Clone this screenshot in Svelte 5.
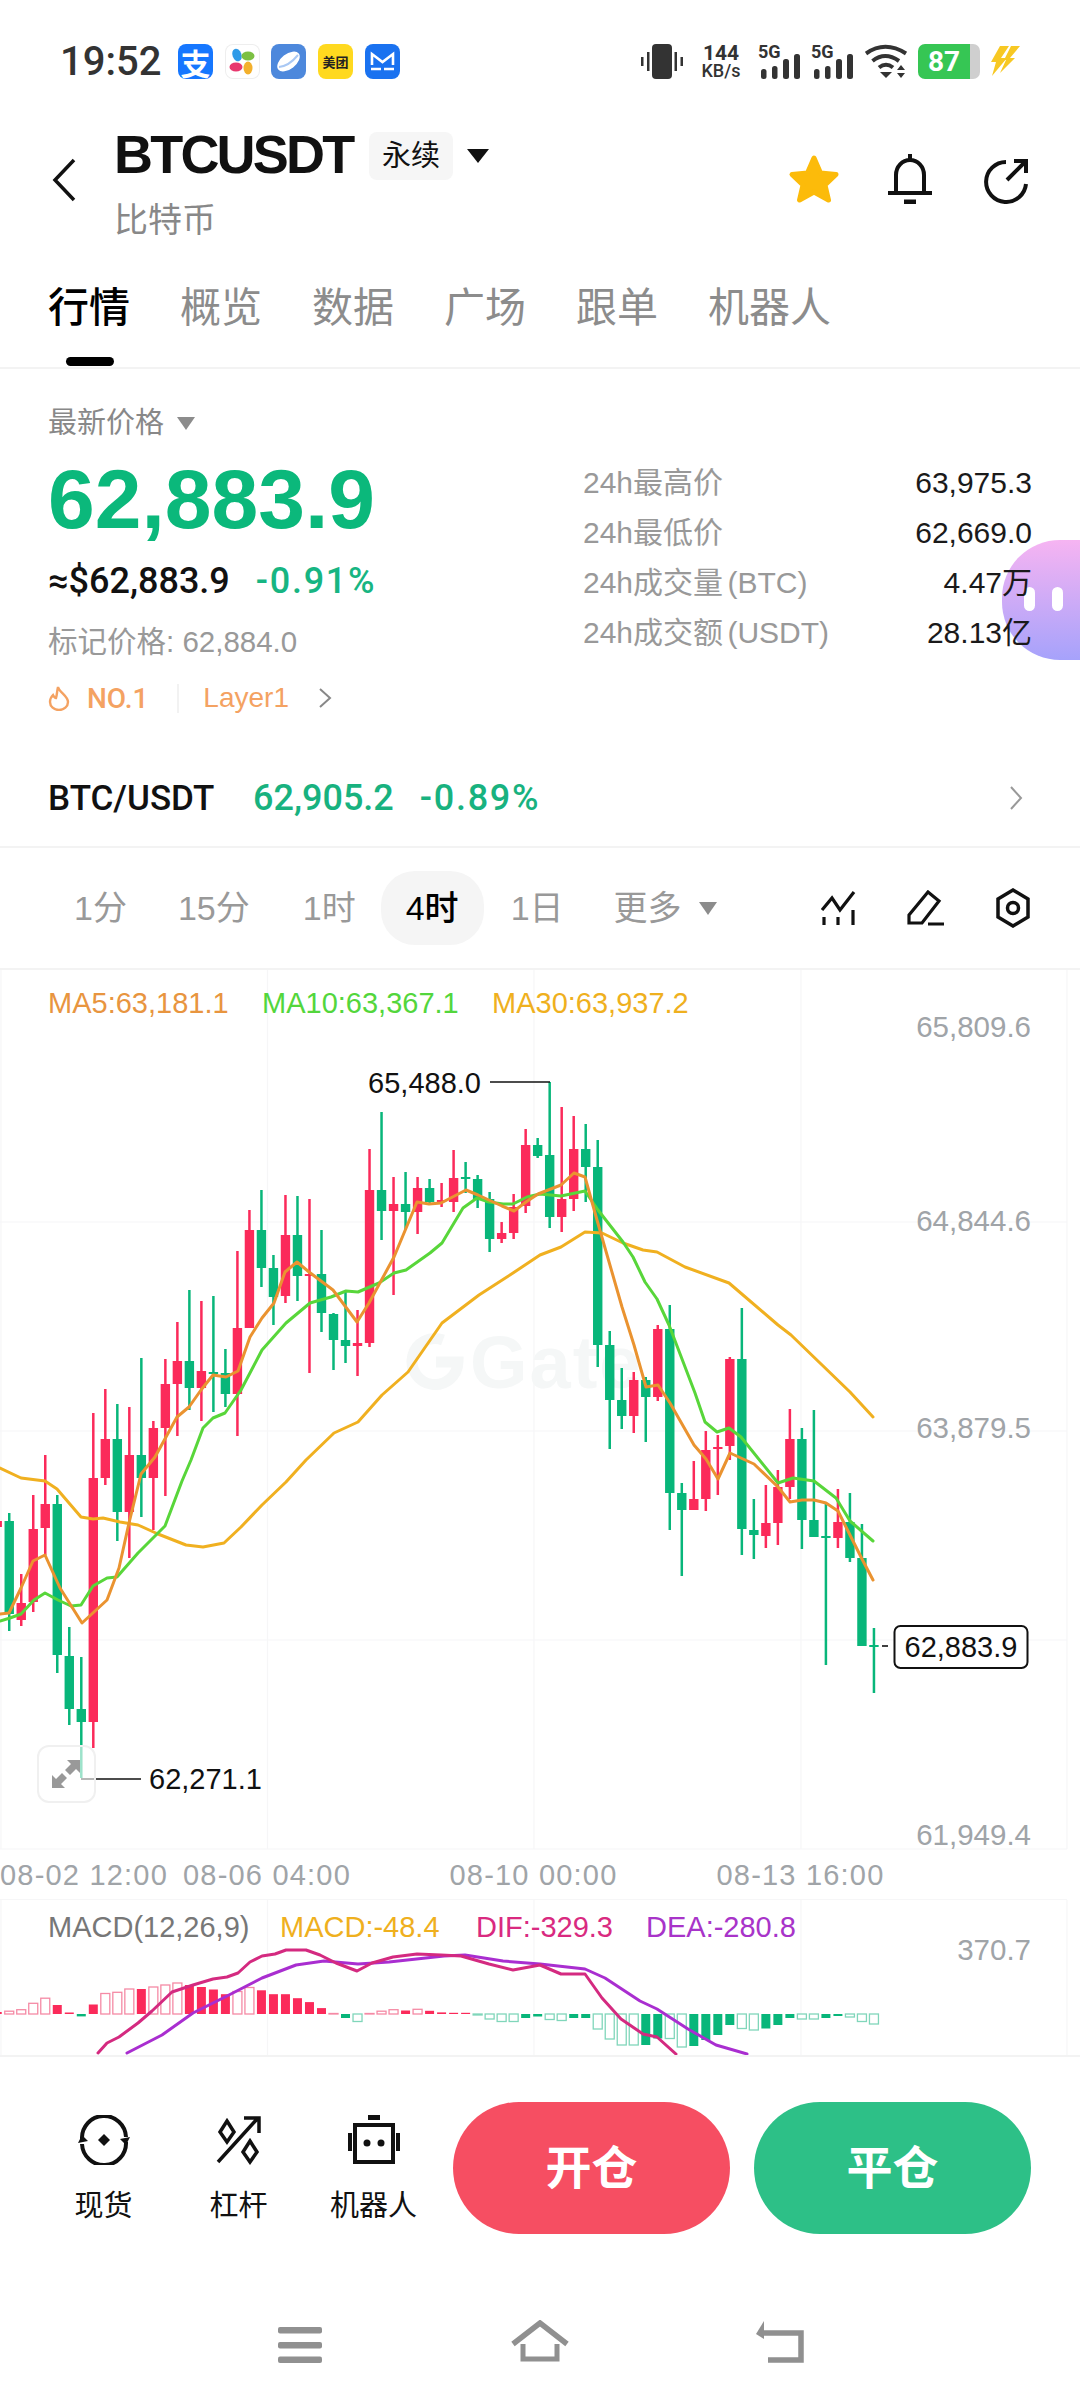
<script>
  // [wickTop, bodyTop, bodyBottom, wickBottom, isRed], first candle sits at i = -8
  const CANDLES = [
    [1521,1521,1527,1527,1],[1513,1521,1614,1631,0],[1574,1603,1620,1626,1],[1495,1529,1602,1612,1],
    [1455,1504,1528,1555,1],[1495,1504,1655,1673,0],[1627,1656,1709,1725,0],[1657,1709,1722,1778,0],
    [1413,1478,1722,1748,1],[1389,1439,1478,1485,1],[1404,1439,1512,1541,0],[1407,1455,1512,1558,1],
    [1358,1455,1478,1517,0],[1421,1428,1478,1530,1],[1359,1384,1428,1496,1],[1322,1361,1384,1436,1],
    [1290,1361,1388,1410,0],[1301,1371,1388,1421,1],[1296,1372,1374,1412,0],[1349,1373,1394,1407,0],
    [1251,1328,1394,1436,1],[1210,1230,1328,1328,1],[1190,1230,1268,1287,0],[1255,1268,1297,1325,0],
    [1195,1235,1296,1303,1],[1196,1235,1276,1301,0],[1199,1274,1276,1373,1],[1230,1274,1313,1332,0],
    [1313,1314,1340,1370,0],[1290,1340,1346,1363,0],[1310,1343,1346,1376,1],[1149,1190,1343,1347,1],
    [1112,1190,1211,1240,0],[1177,1204,1211,1295,1],[1172,1204,1212,1229,0],[1177,1188,1212,1234,1],
    [1179,1188,1202,1205,0],[1183,1200,1202,1207,1],[1150,1178,1202,1212,1],[1162,1177,1179,1193,0],
    [1175,1179,1199,1208,0],[1192,1199,1239,1252,0],[1222,1233,1239,1243,1],[1194,1207,1233,1239,1],
    [1129,1145,1206,1213,1],[1138,1145,1156,1158,0],[1082,1155,1217,1228,0],[1107,1199,1217,1232,1],
    [1116,1149,1199,1211,1],[1124,1149,1167,1202,0],[1140,1167,1345,1367,0],[1331,1345,1400,1449,0],
    [1368,1400,1416,1429,0],[1372,1380,1416,1433,1],[1377,1380,1397,1442,0],[1325,1329,1397,1401,1],
    [1305,1329,1493,1530,0],[1483,1493,1510,1576,0],[1461,1499,1510,1510,1],[1431,1450,1499,1511,1],
    [1435,1447,1449,1495,1],[1357,1359,1446,1460,1],[1308,1359,1529,1555,0],[1499,1530,1535,1559,0],
    [1485,1523,1536,1548,1],[1470,1487,1523,1545,1],[1409,1439,1487,1499,1],[1428,1439,1520,1549,0],
    [1410,1520,1537,1537,0],[1503,1536,1538,1665,0],[1489,1522,1538,1548,1],[1493,1522,1558,1562,0],
    [1524,1558,1646,1646,0],[1628,1645,1647,1693,0]
  ]

  const MA30 = '0,1468 21,1478 45,1481 57,1489 81,1517 93,1519 103,1518 120,1522 138,1525 158,1534 186,1545 203,1547 224,1543 241,1527 262,1505 286,1482 306,1460 334,1433 358,1422 382,1395 408,1372 442,1323 479,1295 513,1273 540,1255 561,1247 585,1232 602,1233 623,1243 643,1250 657,1252 685,1267 729,1283 778,1325 791,1335 850,1392 873,1417'
  const MA10 = '0,1621 10,1618 21,1614 34,1600 45,1593 58,1600 71,1606 81,1605 93,1586 107,1578 117,1577 138,1553 165,1526 182,1481 191,1460 203,1428 213,1418 225,1413 241,1390 262,1350 286,1323 310,1303 331,1297 346,1291 358,1292 379,1283 394,1273 406,1270 430,1253 442,1243 463,1208 477,1198 489,1202 503,1204 513,1204 527,1197 540,1194 561,1196 585,1191 598,1210 623,1242 633,1257 645,1282 657,1299 669,1325 695,1393 705,1422 717,1432 729,1428 741,1437 778,1483 793,1478 814,1481 836,1498 850,1521 873,1541'
  const MA5 = '0,1614 9,1613 21,1588 33,1561 45,1555 60,1588 82,1623 107,1600 119,1568 129,1523 141,1474 155,1457 177,1417 189,1407 201,1390 213,1375 226,1377 238,1371 250,1337 262,1318 274,1303 285,1272 297,1262 309,1272 333,1290 357,1322 369,1303 394,1257 417,1202 429,1204 441,1203 466,1190 478,1195 502,1206 514,1211 526,1202 538,1194 561,1185 574,1173 585,1177 597,1220 622,1307 634,1345 646,1387 658,1385 670,1403 694,1445 706,1459 718,1479 730,1453 754,1464 778,1487 790,1502 802,1500 814,1500 826,1503 838,1511 850,1535 862,1559 873,1580'
  const DIF = '98,2053 107,2043 119,2037 138,2023 152,2011 172,1992 193,1985 213,1979 227,1977 238,1973 250,1962 262,1956 275,1954 286,1950 306,1950 320,1955 336,1963 357,1971 372,1963 393,1957 417,1954 441,1955 461,1956 489,1964 513,1970 540,1965 561,1974 585,1974 602,1998 621,2019 643,2034 657,2037 676,2054'
  const DEA = '127,2053 162,2035 193,2013 227,1996 262,1978 296,1965 324,1961 358,1964 389,1962 444,1956 465,1955 503,1961 540,1964 585,1969 605,1978 640,2001 657,2009 688,2029 716,2045 747,2054'

  // histogram: [height above baseline, filled?], index matches CANDLES
  const BARS = [
    [2,1],[2.8,0],[4.3,0],[10.7,0],[15.8,0],[9,1],[1.5,1],[-2.4,1],[9.5,1],[20.5,0],[21.7,0],[25,0],[25,1],[27,0],[29,0],[31,0],
    [29,1],[27,1],[24.5,1],[19.8,1],[22.5,0],[26.5,0],[23.7,1],[19.8,1],[19.8,1],[15.8,1],[11.9,1],[5.9,1],[0.5,0],[-4,1],[-7.5,0],[0.5,0],
    [2.8,0],[4.3,0],[3.5,1],[4.7,0],[3.2,1],[1.6,1],[1.2,1],[1.2,1],[-1,0],[-5,0],[-7.5,0],[-7.5,0],[-4,1],[-2.5,1],[-5.5,0],[-6.5,0],
    [-4,1],[-4,1],[-15,0],[-25,0],[-31,0],[-31,0],[-31,1],[-24.5,1],[-24.5,0],[-33,0],[-32,1],[-26,1],[-21,1],[-11,1],[-14.5,0],[-16,0],
    [-14.5,1],[-11,1],[-4,1],[-5,0],[-5,0],[-4,1],[-2,1],[-3,0],[-7.5,0],[-10,0]
  ]

  const BASE = 2014
  const xAt = (n) => 93.3 + 12.01 * (n - 8)

  const TABS = ['行情', '概览', '数据', '广场', '跟单', '机器人']
  const STATS = [
    ['24h最高价', '63,975.3'],
    ['24h最低价', '62,669.0'],
    ['24h成交量 (BTC)', '4.47万'],
    ['24h成交额 (USDT)', '28.13亿']
  ]
  const GRID_X = [1, 267.5, 534, 801, 1067]
  const GRID_Y = [1222, 1431, 1640]
</script>

<div class="page">
  <div class="status">
    <span class="time">19:52</span>
    <div class="apps">
      <span class="app alipay">支</span>
      <span class="app petals">
        <svg viewBox="0 0 35 35" width="35" height="35">
          <ellipse cx="12" cy="11" rx="4.500" ry="6.500" fill="#2f9be8" transform="rotate(-20 12 11)"/>
          <ellipse cx="23" cy="12" rx="6.500" ry="4.500" fill="#7cc043"/>
          <ellipse cx="11" cy="23" rx="6.500" ry="4.500" fill="#e8386e"/>
          <ellipse cx="23" cy="24" rx="4.500" ry="6.500" fill="#f3b02c"/>
        </svg>
      </span>
      <span class="app planet">
        <svg viewBox="0 0 35 35" width="35" height="35">
          <ellipse cx="17.500" cy="17.500" rx="13" ry="7.500" fill="#fff" transform="rotate(-38 17.500 17.500)"/>
          <path d="M8 23 Q18 22 27 11" fill="none" stroke="#a9c8f4" stroke-width="2"/>
        </svg>
      </span>
      <span class="app meituan">美团</span>
      <span class="app mail">
        <svg viewBox="0 0 35 35" width="35" height="35">
          <path d="M7 21V10l10.500 8L28 10v11" fill="none" stroke="#fff" stroke-width="2.600"/>
          <path d="M6 25h10M19 25h10" stroke="#fff" stroke-width="2.600"/>
        </svg>
      </span>
    </div>
    <div class="sys">
      <svg class="vib" viewBox="0 0 42 35" width="42" height="35" fill="#333">
        <rect x="11" width="20" height="35" rx="4"/>
        <rect x="6" y="8" width="2.500" height="19"/>
        <rect x="0" y="13" width="2.500" height="9"/>
        <rect x="33.500" y="8" width="2.500" height="19"/>
        <rect x="39.500" y="13" width="2.500" height="9"/>
      </svg>
      <div class="speed"><b>144</b><span>KB/s</span></div>
      {#each [0, 1] as s}
        <div class="sig">
          <span class="fiveg">5G</span>
          <svg viewBox="0 0 42 35" width="42" height="35" fill="#333">
            <rect x="3" y="25" width="5.500" height="10" rx="2.500"/>
            <rect x="14" y="22" width="5.500" height="13" rx="2.500"/>
            <rect x="25" y="15" width="6" height="20" rx="2.500"/>
            <rect x="36" y="10" width="6" height="25" rx="2.500"/>
          </svg>
        </div>
      {/each}
      <svg class="wifi" viewBox="0 0 43 35" width="43" height="35" fill="none" stroke="#333" stroke-width="4">
        <path d="M1 9.500 Q20 -4 41 9.500"/>
        <path d="M7.500 17 Q20 7 34 17"/>
        <path d="M14 23.500 Q21 18 28 23.500"/>
        <path d="M15 28h12l-6 6z" fill="#333" stroke="none"/>
        <path d="M32 26l4-5 4 5zM32 29h8l-4 5z" fill="#333" stroke="none"/>
      </svg>
      <div class="batt"><span class="lvl">87</span><span class="cap"></span></div>
      <svg class="bolt" viewBox="0 0 30 35" width="30" height="35" fill="#f7c823">
        <path d="M10 2h9l-8 12h6L2 32l4-14H1z"/>
        <path d="M21 2h9L20 14h5L10 29l6-13h-2z"/>
      </svg>
    </div>
  </div>

  <div class="head">
    <svg class="back" viewBox="0 0 24 44" width="24" height="44" fill="none" stroke="#111" stroke-width="3.500">
      <path d="M22 2 3 22l19 20"/>
    </svg>
    <div class="title">
      <div class="title-row">
        <span class="sym">BTCUSDT</span>
        <span class="tag">永续</span>
        <span class="tri-black"></span>
      </div>
      <div class="sub">比特币</div>
    </div>
    <div class="head-icons">
      <svg viewBox="0 0 54 50" width="54" height="50" class="star">
        <polygon points="27,4 33.500,19 49,20.500 38,31 41.500,46 27,38 12.500,46 16,31 5,20.500 20.500,19" fill="#fcbb0a" stroke="#fcbb0a" stroke-width="5" stroke-linejoin="round"/>
      </svg>
      <svg viewBox="0 0 46 50" width="46" height="50" class="bell" fill="none" stroke="#111" stroke-width="4">
        <path d="M23 0v6M9 39V21a14 15 0 0 1 28 0v18M1 39h44"/>
        <path d="M17 48h12" stroke-width="5"/>
      </svg>
      <svg viewBox="0 0 46 46" width="46" height="46" class="share" fill="none" stroke="#111" stroke-width="4">
        <path d="M23 4A20 20 0 1 0 43 26"/>
        <path d="M24 22 43 3M31 3h12v12"/>
      </svg>
    </div>
  </div>

  <div class="tabs">
    {#each TABS as t, i}
      <span class="tab" class:on={i === 0}>{t}</span>
    {/each}
  </div>

  <div class="info">
    <div class="left">
      <div class="latest">最新价格<span class="tri-grey"></span></div>
      <div class="price">62,883.9</div>
      <div class="usd"><span>≈$62,883.9</span><span class="pct">-0.91%</span></div>
      <div class="mark">标记价格: 62,884.0</div>
      <div class="rank">
        <svg viewBox="0 0 22 26" width="22" height="26" fill="none" stroke="#f4a262" stroke-width="2.400">
          <path d="M10 2c1 5 10 9 10 15a9 8 0 0 1-18 0c0-3 1-5 3-7 1 2 2 3 3 3 1-3 1-7 2-11z"/>
        </svg>
        <span class="no">NO.1</span>
        <span class="vr"></span>
        <span>Layer1</span>
        <svg class="rank-arrow" viewBox="0 0 14 20" width="14" height="20" fill="none" stroke="#888" stroke-width="2">
          <path d="M2 1l10 9-10 9"/>
        </svg>
      </div>
    </div>
    <div class="right">
      {#each STATS as s}
        <div class="stat"><span class="k">{s[0]}</span><span class="v">{s[1]}</span></div>
      {/each}
    </div>
    <div class="bot">
      <i></i><i></i>
    </div>
  </div>

  <div class="pair">
    <span class="pair-name">BTC/USDT</span>
    <span class="pair-num">62,905.2</span>
    <span class="pair-num pair-pct">-0.89%</span>
    <svg class="pair-arrow" viewBox="0 0 14 24" width="14" height="24" fill="none" stroke="#999" stroke-width="2">
      <path d="M2 1l10 11L2 23"/>
    </svg>
  </div>

  <div class="periods">
    <span class="p p1">1分</span>
    <span class="p p2">15分</span>
    <span class="p p3">1时</span>
    <span class="p cur">4时</span>
    <span class="p p4">1日</span>
    <span class="p p5">更多<span class="tri-grey more"></span></span>
    <div class="tools">
      <svg viewBox="0 0 36 36" width="36" height="36" fill="none" stroke="#111" stroke-width="3.200">
        <path d="M1 20l10-12 8 12L33 2"/>
        <path d="M3 27v8M17 27v8M32 20v15"/>
      </svg>
      <svg viewBox="0 0 38 37" width="38" height="37" fill="none" stroke="#111" stroke-width="3.200">
        <path d="M2 25 21 2l11 9-17 22H2zM21 34h16"/>
      </svg>
      <svg viewBox="0 0 36 40" width="36" height="40" fill="none" stroke="#111" stroke-width="3.500">
        <path d="M18 2l15 9v18l-15 9-15-9V11z"/>
        <circle cx="18" cy="20" r="5.500"/>
      </svg>
    </div>
  </div>

  <svg class="chart" viewBox="0 970 1080 1085" width="1080" height="1085">
    <defs>
      <clipPath id="macdClip"><rect x="0" y="1900" width="1080" height="155"/></clipPath>
    </defs>

    {#each GRID_X as x}
      <line x1={x} x2={x} y1="970" y2="1849" class="grid"/>
      <line x1={x} x2={x} y1="1900" y2="2055" class="grid"/>
    {/each}
    {#each GRID_Y as y}
      <line x1="0" x2="1067" y1={y} y2={y} class="grid"/>
    {/each}
    <line x1="0" x2="1067" y1="1849" y2="1849" class="grid"/>
    <line x1="0" x2="1067" y1="1899.500" y2="1899.500" class="grid"/>

    <g>
      <path d="M443 1340a23 23 0 1 0 15 22h-22" fill="none" stroke="#f5f7f7" stroke-width="11"/>
      <text x="470" y="1388" class="wm">Gate</text>
    </g>

    {#each CANDLES as c, i}
      <line x1={xAt(i)} x2={xAt(i)} y1={c[0]} y2={c[3]} stroke={c[4] ? '#fb2a5a' : '#08b67a'} stroke-width="2.500"/>
      <rect x={xAt(i) - 4.700} y={c[1]} width="9.400" height={c[2] - c[1]} fill={c[4] ? '#fb2a5a' : '#08b67a'}/>
    {/each}

    <polyline points={MA30} class="ma" stroke="#f0b020"/>
    <polyline points={MA10} class="ma" stroke="#58d63a"/>
    <polyline points={MA5} class="ma" stroke="#ea9330"/>

    <text x="48" y="1013" class="lbl" fill="#e8953f">MA5:63,181.1</text>
    <text x="262" y="1013" class="lbl" fill="#53d63c">MA10:63,367.1</text>
    <text x="492" y="1013" class="lbl" fill="#efb01e">MA30:63,937.2</text>

    <text x="1031" y="1037" class="axis end">65,809.6</text>
    <text x="1031" y="1231" class="axis end">64,844.6</text>
    <text x="1031" y="1438" class="axis end">63,879.5</text>
    <text x="1031" y="1845" class="axis end">61,949.4</text>

    <text x="481" y="1093" class="tag-text end">65,488.0</text>
    <path d="M490 1082h60" stroke="#111" stroke-width="1.600" fill="none"/>
    <text x="149" y="1789" class="tag-text">62,271.1</text>
    <path d="M81 1779h60" stroke="#111" stroke-width="1.600" fill="none"/>

    <rect x="38" y="1746" width="57" height="56" rx="11" fill="#fff" fill-opacity="0.600" stroke="#f0f0f0" stroke-width="2"/>
    <path d="M52 1788l0-13 4 4 6-6 5 5-6 6 4 4zM80 1760l0 13-4-4-6 6-5-5 6-6-4-4z" fill="#999"/>

    <path d="M882 1646h6" stroke="#111" stroke-width="1.600"/>
    <rect x="894.500" y="1626" width="133" height="42" rx="6" fill="#fff" stroke="#111" stroke-width="2"/>
    <text x="961" y="1657" class="tag-text mid">62,883.9</text>

    <text x="0" y="1885" class="axis date">08-02 12:00</text>
    <text x="267" y="1885" class="axis date mid">08-06 04:00</text>
    <text x="533.500" y="1885" class="axis date mid">08-10 00:00</text>
    <text x="800.500" y="1885" class="axis date mid">08-13 16:00</text>

    <text x="48" y="1937" class="lbl" fill="#777">MACD(12,26,9)</text>
    <text x="280" y="1937" class="lbl" fill="#efb01e">MACD:-48.4</text>
    <text x="476" y="1937" class="lbl" fill="#d92a80">DIF:-329.3</text>
    <text x="646" y="1937" class="lbl" fill="#a834c9">DEA:-280.8</text>
    <text x="1031" y="1960" class="axis end">370.7</text>

    <g clip-path="url(#macdClip)">
      {#each BARS as b, i}
        {@const col = b[0] > 0 ? '#fb2a5a' : '#08b67a'}
        {@const soft = b[0] > 0 ? '#f58aa5' : '#80d6ba'}
        {@const top = b[0] > 0 ? BASE - b[0] : BASE}
        <rect
          x={xAt(i) - 4.500}
          y={top}
          width="9"
          height={Math.abs(b[0])}
          fill={b[1] ? col : '#fff'}
          stroke={b[1] ? 'none' : soft}
          stroke-width="1.300"
        />
      {/each}
      <polyline points={DEA} class="ma" stroke="#a92ed0"/>
      <polyline points={DIF} class="ma" stroke="#d42a80"/>
    </g>
  </svg>

  <div class="actions">
    <div class="act">
      <svg viewBox="0 0 52 50" width="52" height="50" fill="none" stroke="#111" stroke-width="4">
        <path d="M4 24A22 22 0 0 1 48 22"/>
        <path d="M48 27A22 22 0 0 1 4 29"/>
        <path d="M42 24l6 6 4-8zM10 26l-6-6-4 8z" fill="#111" stroke="none"/>
        <path d="M26 19l6 6-6 6-6-6z" fill="#111" stroke="none"/>
      </svg>
      <span>现货</span>
    </div>
    <div class="act">
      <svg viewBox="0 0 46 50" width="46" height="50" fill="none" stroke="#111" stroke-width="3.500">
        <path d="M2 47 42 3M28 3h15v15"/>
        <path d="M11 6l7 11-7 10-7-10zM34 26l7 11-7 10-7-10z"/>
      </svg>
      <span>杠杆</span>
    </div>
    <div class="act">
      <svg viewBox="0 0 52 50" width="52" height="50" fill="none" stroke="#111" stroke-width="4">
        <path d="M7 10h38v37H7zM2 18v18M50 18v18"/>
        <path d="M20 0h12v5H20z" fill="#111" stroke="none"/>
        <circle cx="19" cy="28" r="3.500" fill="#111" stroke="none"/>
        <circle cx="33" cy="28" r="3.500" fill="#111" stroke="none"/>
      </svg>
      <span>机器人</span>
    </div>
    <div class="btn open">开仓</div>
    <div class="btn close">平仓</div>
  </div>

  <div class="nav">
    <svg viewBox="0 0 44 36" width="44" height="36" fill="#909090">
      <rect width="44" height="6.500" rx="2"/>
      <rect y="15" width="44" height="6.500" rx="2"/>
      <rect y="29.500" width="44" height="6.500" rx="2"/>
    </svg>
    <svg viewBox="0 0 58 43" width="58" height="43" fill="none" stroke="#909090" stroke-width="5.500">
      <path d="M2 24 29 3l27 21"/>
      <path d="M12 24v15h34V24" stroke-width="5"/>
    </svg>
    <svg viewBox="0 0 48 43" width="48" height="43" fill="none" stroke="#909090" stroke-width="5.500">
      <path d="M8 13h37v27H12"/>
      <path d="M0 14 8 1v18z" fill="#909090" stroke="none"/>
    </svg>
  </div>
</div>

<style>
  :global(body) {
    margin: 0;
    background: #fff;
  }

  .page {
    width: 1080px;
    height: 2408px;
    overflow: hidden;
    position: relative;
    background: #fff;
    color: #111;
    font-family: "Liberation Sans", "Noto Sans CJK SC", sans-serif;
  }

  .status {
    display: flex;
    align-items: center;
    height: 35px;
    padding: 44px 60px 21px;
    color: #333;
  }

  .time {
    width: 118px;
    font: 500 40px/35px Roboto, sans-serif;
  }

  .apps {
    display: flex;
    gap: 11.700px;
  }

  .app {
    width: 35px;
    height: 35px;
    border-radius: 8px;
    display: flex;
    align-items: center;
    justify-content: center;
    overflow: hidden;
  }

  .alipay {
    background: #1677ff;
    color: #fff;
    font-size: 30px;
    font-weight: 700;
  }

  .petals {
    box-sizing: border-box;
    background: #fff;
    box-shadow: inset 0 0 0 1px #eee;
  }

  .planet { background: #4d88dc; }

  .meituan {
    background: #ffd91f;
    color: #222;
    font-size: 13px;
    font-weight: 700;
  }

  .mail { background: #1a72f0; }

  .sys {
    margin-left: auto;
    display: flex;
    align-items: center;
  }

  .speed {
    margin-left: 17px;
    width: 42px;
    display: flex;
    flex-direction: column;
    align-items: center;
    font-family: Roboto, sans-serif;
    line-height: 17px;
  }

  .speed b { font-size: 21px; line-height: 18px; }
  .speed span { font-size: 18px; font-weight: 500; }

  .sig {
    margin-left: 11px;
    width: 42px;
    height: 35px;
    position: relative;
  }

  .sig svg {
    display: block;
  }

  .fiveg {
    position: absolute;
    left: 0;
    top: 0;
    font: 700 18px/16px Roboto, sans-serif;
  }

  .speed + .sig { margin-left: 16px; }
  .wifi { margin-left: 12px; }

  .batt {
    margin-left: 10px;
    width: 62px;
    height: 35px;
    display: flex;
  }

  .lvl {
    width: 52px;
    background: #36c654;
    border-radius: 7px 0 0 7px;
    color: #fff;
    font: 700 28px/35px Roboto, sans-serif;
    text-align: center;
  }

  .cap {
    width: 10px;
    background: #cfcfcf;
    border-radius: 0 7px 7px 0;
  }

  .bolt { margin-left: 10px; }

  .head {
    display: flex;
    align-items: flex-start;
    height: 118px;
    padding: 32px 49px 0 52px;
  }

  .back { margin: 26px 38px 0 0; flex: none; }

  .title { flex: 1; }

  .title-row {
    display: flex;
    align-items: center;
    height: 48px;
  }

  .sym {
    font-size: 54px;
    font-weight: 700;
    letter-spacing: -2.800px;
    width: 255px;
    margin-top: -5px;
  }

  .tag {
    width: 84px;
    height: 48px;
    line-height: 48px;
    text-align: center;
    font-size: 29px;
    background: #f6f6f6;
    border-radius: 8px;
  }

  .tri-black {
    margin-left: 14px;
    border-left: 11px solid transparent;
    border-right: 11px solid transparent;
    border-top: 14px solid #111;
  }

  .sub {
    margin-top: 23px;
    font-size: 34px;
    line-height: 34px;
    color: #888;
  }

  .head-icons {
    display: flex;
    align-items: flex-start;
    margin-top: 22px;
    margin-right: 2px;
  }

  .star { margin-right: 46px; margin-top: 0; }
  .bell { margin-right: 50px; }
  .share { margin-top: 4px; }

  .tabs {
    display: flex;
    gap: 50px;
    height: 117px;
    box-sizing: content-box;
    padding-left: 48px;
    border-bottom: 2px solid #f3f3f3;
    position: relative;
  }

  .tab {
    margin-top: 36px;
    font-size: 41px;
    line-height: 44px;
    color: #8c8c8c;
    position: relative;
    height: 44px;
  }

  .tab.on {
    color: #000;
    font-weight: 500;
  }

  .tab.on::after {
    content: '';
    position: absolute;
    left: 18px;
    width: 48px;
    top: 71px;
    height: 9px;
    border-radius: 5px;
    background: #000;
  }

  .info {
    position: relative;
    height: 381px;
    display: flex;
    padding: 0 48px 0 48px;
  }

  .left { width: 535px; }

  .latest {
    margin-top: 36px;
    font-size: 29px;
    line-height: 36px;
    color: #888;
    display: flex;
    align-items: center;
  }

  .tri-grey {
    margin-left: 13px;
    border-left: 9px solid transparent;
    border-right: 9px solid transparent;
    border-top: 13px solid #8c8c8c;
  }

  .price {
    margin-top: 20px;
    font-size: 84px;
    line-height: 76px;
    font-weight: 700;
    color: #0bb87b;
  }

  .usd {
    margin-top: 24px;
    font: 500 36px/40px Roboto, sans-serif;
    display: flex;
    gap: 26px;
  }

  .pct {
    color: #17b582;
    letter-spacing: 1.700px;
  }

  .mark {
    margin-top: 23px;
    font-size: 29.500px;
    line-height: 36px;
    color: #999;
  }

  .rank {
    margin-top: 23px;
    display: flex;
    align-items: center;
    height: 30px;
    font-size: 28px;
    color: #f4a262;
  }

  .no {
    margin-left: 17px;
    font: 500 28px Roboto, sans-serif;
  }

  .vr {
    width: 2px;
    height: 29px;
    background: #f2f2f2;
    margin: 0 24px 0 29px;
  }

  .rank-arrow { margin-left: 29px; }

  .right {
    flex: 1;
    padding-top: 89px;
    position: relative;
    z-index: 1;
  }

  .stat {
    display: flex;
    justify-content: space-between;
    height: 50px;
    line-height: 50px;
    font-size: 30px;
  }

  .k { color: #999; word-spacing: -4px; }
  .v { color: #1a1a1a; }

  .bot {
    position: absolute;
    left: 1002px;
    top: 171px;
    width: 78px;
    height: 120px;
    border-radius: 58px 0 0 58px;
    background: linear-gradient(#f6b4f2, #a6a2fb);
    display: flex;
    gap: 17px;
    padding: 47px 0 0 22px;
    box-sizing: border-box;
  }

  .bot i {
    width: 11px;
    height: 24px;
    border-radius: 6px;
    background: #fff;
  }

  .pair {
    height: 96px;
    display: flex;
    align-items: center;
    padding: 0 57px 0 48px;
    border-bottom: 2px solid #f3f3f3;
    font-family: Roboto, sans-serif;
    font-weight: 500;
  }

  .pair-name {
    font-size: 35px;
    width: 205px;
  }

  .pair-num {
    font-size: 36px;
    color: #18b27f;
  }

  .pair-pct {
    margin-left: 26px;
    letter-spacing: 1.700px;
  }

  .pair-arrow { margin-left: auto; }

  .periods {
    height: 120px;
    display: flex;
    align-items: center;
    border-bottom: 2px solid #f3f3f3;
    font-size: 34px;
    color: #999;
  }

  .p { line-height: 40px; }
  .p1 { margin-left: 74px; }
  .p2 { margin-left: 51px; }
  .p3 { margin-left: 53px; }

  .cur {
    margin-left: 25px;
    width: 103px;
    height: 74px;
    line-height: 74px;
    text-align: center;
    border-radius: 34px;
    background: #f5f5f5;
    color: #000;
    font-weight: 500;
  }

  .p4 { margin-left: 27px; }

  .p5 {
    margin-left: 50px;
    display: flex;
    align-items: center;
  }

  .more { margin-left: 17px; }

  .tools {
    margin-left: auto;
    margin-right: 49px;
    display: flex;
    align-items: center;
    gap: 50px;
  }

  .chart {
    display: block;
    font-family: "Liberation Sans", sans-serif;
  }

  .grid {
    stroke: #f6f6f7;
    stroke-width: 1.200;
  }

  .wm {
    font-size: 74px;
    font-weight: 700;
    fill: #f5f7f7;
    letter-spacing: 2px;
  }

  .ma {
    fill: none;
    stroke-width: 3;
    stroke-linejoin: round;
    stroke-linecap: round;
  }

  .lbl { font-size: 29px; }

  .axis {
    font-size: 29.500px;
    fill: #a0a4a8;
  }

  .date {
    letter-spacing: 1.200px;
    font-size: 29px;
  }

  .tag-text {
    font-size: 29px;
    fill: #111;
  }

  .end { text-anchor: end; }
  .mid { text-anchor: middle; }

  .actions {
    border-top: 2px solid #f3f3f3;
    height: 135px;
    padding: 45px 48px 0 36px;
    display: flex;
    align-items: flex-start;
  }

  .act {
    width: 135px;
    padding-top: 13px;
    display: flex;
    flex-direction: column;
    align-items: center;
    gap: 25px;
    font-size: 29px;
    line-height: 32px;
  }

  .btn {
    height: 132px;
    width: 277px;
    border-radius: 66px;
    color: #fff;
    font-size: 46px;
    font-weight: 700;
    line-height: 132px;
    text-align: center;
  }

  .open {
    margin-left: 12px;
    background: #f64e62;
  }

  .close {
    margin-left: 24px;
    background: #2dc087;
  }

  .nav {
    display: grid;
    grid-template-columns: repeat(3, 240px);
    justify-items: center;
    align-items: end;
    padding: 83px 180px 0;
    height: 43px;
  }
</style>
